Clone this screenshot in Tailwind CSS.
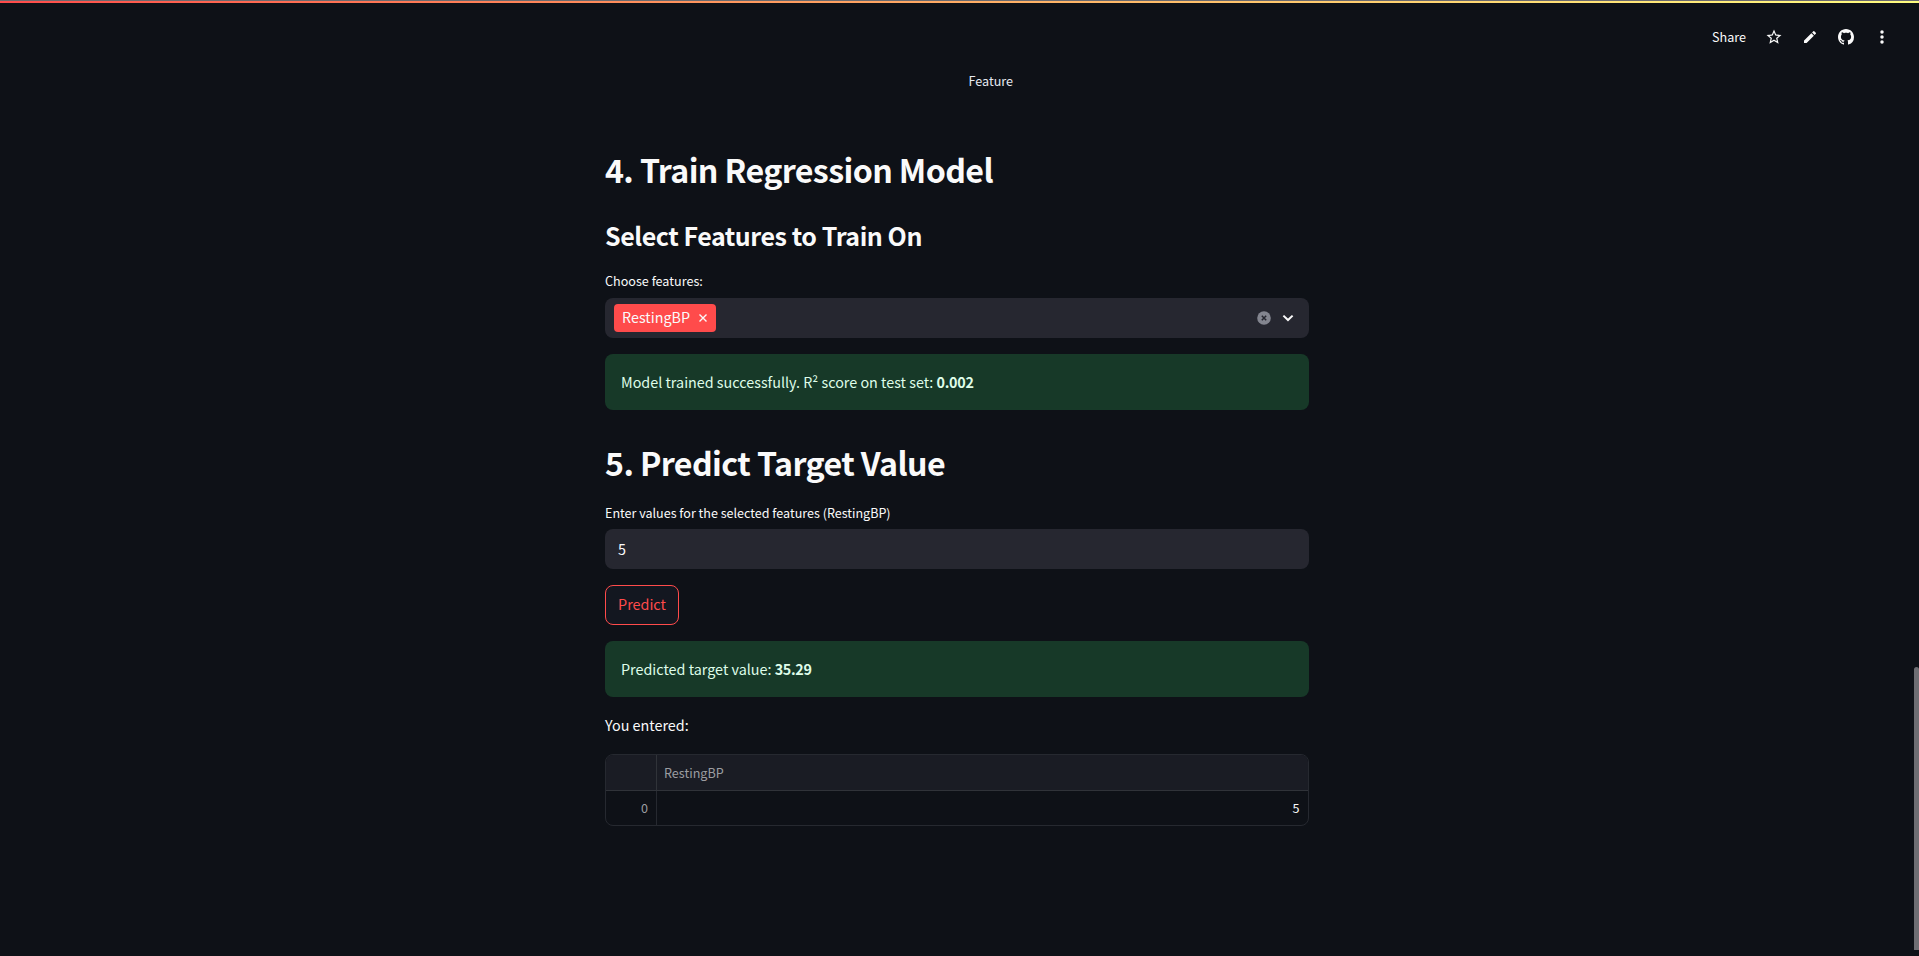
<!DOCTYPE html>
<html lang="en">
<head>
<meta charset="utf-8">
<title>Train Regression Model</title>
<script src="https://cdn.jsdelivr.net/npm/@tailwindcss/browser@4"></script>
</head>
<body class="relative h-[956px] overflow-hidden bg-[#0e1117] font-['Noto_Sans_CJK_SC','Noto_Sans',sans-serif] text-[14.35px] leading-6 text-[#fafafa]">
  <div class="h-px bg-[#6a6a6f]"></div>
  <div class="h-0.5 bg-linear-to-r from-[#ff4b4b] to-[#fffd80]"></div>

  <header class="absolute top-[23px] right-[19px] flex h-7 items-center text-[12.6px]">
    <span class="mr-2.5">Share</span>
    <span class="flex w-9 justify-center"><svg class="size-[18px]" viewBox="0 0 24 24" fill="currentColor"><path d="M22 9.24l-7.19-.62L12 2 9.19 8.63 2 9.24l5.46 4.73L5.82 21 12 17.27 18.18 21l-1.63-7.03L22 9.24zM12 15.4l-3.76 2.27 1-4.28-3.32-2.88 4.38-.38L12 6.1l1.71 4.04 4.38.38-3.32 2.88 1 4.28L12 15.4z"/></svg></span>
    <span class="flex w-9 justify-center"><svg class="size-4" viewBox="0 0 24 24" fill="currentColor"><path d="M3 17.46v3.04c0 .28.22.5.5.5h3.04c.13 0 .26-.05.35-.15L17.81 9.94l-3.75-3.75L3.15 17.1c-.1.1-.15.22-.15.36zM20.71 7.04a1 1 0 000-1.41l-2.34-2.34a1 1 0 00-1.41 0l-1.83 1.83 3.75 3.75 1.83-1.83z"/></svg></span>
    <span class="flex w-9 justify-center"><svg class="size-4" viewBox="0 0 16 16" fill="currentColor"><path d="M8 0C3.58 0 0 3.58 0 8c0 3.54 2.29 6.53 5.47 7.59.4.07.55-.17.55-.38 0-.19-.01-.82-.01-1.49-2.01.37-2.53-.49-2.69-.94-.09-.23-.48-.94-.82-1.13-.28-.15-.68-.52-.01-.53.63-.01 1.08.58 1.23.82.72 1.21 1.87.87 2.33.66.07-.52.28-.87.51-1.07-1.78-.2-3.64-.89-3.64-3.95 0-.87.31-1.59.82-2.15-.08-.2-.36-1.02.08-2.12 0 0 .67-.21 2.2.82.64-.18 1.32-.27 2-.27s1.36.09 2 .27c1.53-1.04 2.2-.82 2.2-.82.44 1.1.16 1.92.08 2.12.51.56.82 1.27.82 2.15 0 3.07-1.87 3.75-3.65 3.95.29.25.54.73.54 1.48 0 1.07-.01 1.93-.01 2.2 0 .21.15.46.55.38A8.01 8.01 0 0016 8c0-4.42-3.58-8-8-8z"/></svg></span>
    <span class="flex w-9 justify-center"><svg class="size-5" viewBox="0 0 24 24" fill="currentColor"><circle cx="12" cy="6" r="2.1"/><circle cx="12" cy="12" r="2.1"/><circle cx="12" cy="18" r="2.1"/></svg></span>
  </header>

  <main class="ml-[605px] flex w-[704px] flex-col">
    <div class="mt-[66px] h-6 pl-[363.5px] text-[12.6px] text-[#e6eaf1]">Feature</div>
    <h1 class="mt-[54px] h-11 text-[32.2px] leading-11 font-bold tracking-[-0.62px]">4. Train Regression Model</h1>
    <h2 class="mt-7 h-8 text-[25px] leading-8 font-bold tracking-[-0.45px]">Select Features to Train On</h2>
    <label class="mt-[18px] h-6 text-[12.6px]">Choose features:</label>
    <div class="mt-[5px] flex h-10 items-center rounded-lg bg-[#262730] pr-[14px] pl-[9px]">
      <span class="flex h-7 w-[102px] items-center justify-between rounded bg-[#ff4b4b] px-2"><span class="pb-0.5">RestingBP</span>
        <svg class="mr-px size-2" viewBox="0 0 8 8" stroke="currentColor" stroke-width="1.4"><path d="M.5.5l7 7M7.5.5l-7 7"/></svg>
      </span>
      <svg class="ml-auto size-[14px]" viewBox="0 0 14 14"><circle cx="7" cy="7" r="6.8" fill="#83858f"/><path d="M4.8 4.8l4.4 4.4M9.2 4.8L4.8 9.2" stroke="#262730" stroke-width="1.5"/></svg>
      <svg class="ml-[10px] h-3 w-[14px]" viewBox="0 0 14 12" fill="none" stroke="currentColor" stroke-width="2"><path d="M2.4 3.6L7 8l4.6-4.4"/></svg>
    </div>
    <div class="mt-4 h-14 rounded-lg bg-[#173928] px-4 py-4 text-[#dffde9]">Model trained successfully. R² score on test set: <b class="tracking-[-0.3px]">0.002</b></div>
    <h1 class="mt-[30px] h-11 text-[32.2px] leading-11 font-bold tracking-[-0.6px]">5. Predict Target Value</h1>
    <label class="mt-[17px] h-6 text-[12.55px]">Enter values for the selected features (RestingBP)</label>
    <div class="mt-1 flex h-10 items-center rounded-lg bg-[#262730] px-[13px]">5</div>
    <button class="mt-4 h-10 w-[74px] rounded-lg border border-[#ff4b4b] bg-[#131720] pb-0.5 text-[#ff4b4b]">Predict</button>
    <div class="mt-4 h-14 rounded-lg bg-[#173928] px-4 py-4 text-[#dffde9]">Predicted target value: <b class="tracking-[-0.3px]">35.29</b></div>
    <p class="mt-4 h-6">You entered:</p>
    <div class="mt-[17px] grid h-[72px] grid-cols-[51px_1fr] grid-rows-[36px_34px] overflow-hidden rounded-lg border border-[#262930] text-[12.6px] text-[#9c9da1]">
      <div class="border-r border-b border-[#303339] bg-[#1a1c24]"></div>
      <div class="flex items-center border-b border-[#303339] bg-[#1a1c24] pl-[7px]">RestingBP</div>
      <div class="flex items-center justify-end border-r border-[#262930] pr-2">0</div>
      <div class="flex items-center justify-end pr-[8.5px] text-[#fafafa]">5</div>
    </div>
  </main>

  <div class="absolute top-[667px] right-0 h-[283px] w-[5px] rounded-t-sm bg-[#6e6e73]"></div>
</body>
</html>
